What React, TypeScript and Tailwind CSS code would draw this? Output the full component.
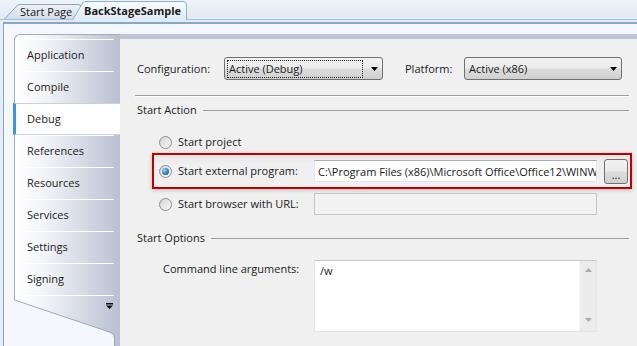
import React from 'react';

const navItems = ['Application', 'Compile', 'Debug', 'References', 'Resources', 'Services', 'Settings', 'Signing'];

function Radio({ checked }: { checked?: boolean }) {
  return (
    <span className="w-[13px] h-[13px] shrink-0 rounded-full border border-[#8e8f8f] bg-[linear-gradient(135deg,#d4d4d4,#fafafa)] flex items-center justify-center">
      {checked && (
        <span className="w-[7px] h-[7px] rounded-full bg-[radial-gradient(circle_at_35%_35%,#9ad8f7,#2a7cc0_55%,#174f83)]" />
      )}
    </span>
  );
}

function ComboArrow() {
  return (
    <svg width="7" height="4" viewBox="0 0 7 4" className="shrink-0">
      <path d="M0 0H7L3.5 4Z" fill="#000" />
    </svg>
  );
}

function Combo({ value, focus, className }: { value: string; focus?: boolean; className: string }) {
  return (
    <div
      className={`h-[23px] rounded-[3px] border border-[#707070] bg-[linear-gradient(#f2f2f2,#ebebeb_48%,#dddddd_52%,#cfcfcf)] flex items-center pl-[2px] pr-[4px] ${className}`}
    >
      {focus ? (
        <div className="w-[136px] h-[18px] border border-dotted border-[#202020] flex items-center pl-[1px]">{value}</div>
      ) : (
        <div className="pl-[2px]">{value}</div>
      )}
      <div className="ml-auto">
        <ComboArrow />
      </div>
    </div>
  );
}

function SectionHeader({ title }: { title: string }) {
  return (
    <div className="h-[16px] flex items-center">
      <span className="pl-[2px]">{title}</span>
      <div className="flex-1 ml-[6px] h-px bg-[#a0a0a0]" />
    </div>
  );
}

function NavBottom() {
  return (
    <svg width="106" height="46" viewBox="0 0 106 46" className="block">
      <defs>
        <linearGradient id="navg" x1="0" y1="0" x2="1" y2="0">
          <stop offset="0" stopColor="#ffffff" />
          <stop offset="0.3" stopColor="#f1f3f7" />
          <stop offset="1" stopColor="#b8c0d1" />
        </linearGradient>
      </defs>
      <path d="M0 0H106V46H100V38Q100 33 94 31.5Z" fill="url(#navg)" />
      <path d="M0.5 0L94 31.5Q100.5 33.5 100.5 38V46" fill="none" stroke="#9ba7bb" />
      <rect x="92" y="3" width="7" height="1.5" fill="#111" />
      <path d="M92 5.5H99L95.5 9Z" fill="#111" />
    </svg>
  );
}

export default function App() {
  return (
    <div className="w-[637px] h-[346px] overflow-hidden bg-[#e4ebf5] text-[11px] leading-[16px] text-[#1b1b1b] font-['Open_Sans',sans-serif] flex flex-col">
      {/* document tabs */}
      <div className="h-[20px] shrink-0 flex items-end pl-[4px] border-b border-[#a6c4de] bg-[linear-gradient(#eef3f9,#e2e9f3)]">
        <div className="relative w-[78px] h-[15px] flex items-center">
          <svg width="78" height="15" viewBox="0 0 78 15" className="absolute inset-0">
            <defs>
              <linearGradient id="tab1" x1="0" y1="0" x2="0" y2="1">
                <stop offset="0" stopColor="#eef2f8" />
                <stop offset="1" stopColor="#d3dce8" />
              </linearGradient>
            </defs>
            <path d="M0.5 15L13 1.8Q14 0.5 16 0.5H74Q77.5 0.5 77.5 4V15" fill="url(#tab1)" stroke="#8ea5bf" />
          </svg>
          <span className="relative pl-[16px] pt-[1px] whitespace-nowrap">Start Page</span>
        </div>
        <div className="relative -ml-[10px] -mb-px w-[115px] h-[19px] flex items-center">
          <svg width="115" height="19" viewBox="0 0 115 19" className="absolute inset-0">
            <defs>
              <linearGradient id="tab2" x1="0" y1="0" x2="0" y2="1">
                <stop offset="0" stopColor="#fbfdff" />
                <stop offset="1" stopColor="#e0eaf5" />
              </linearGradient>
            </defs>
            <path d="M0.5 19L11 1.5Q12 0.5 14 0.5H111Q114.5 0.5 114.5 4V19" fill="url(#tab2)" stroke="#8db0d0" />
          </svg>
          <span className="relative pl-[12px] font-bold whitespace-nowrap">BackStageSample</span>
        </div>
      </div>

      {/* window frame */}
      <div className="flex-1 mt-[2px] ml-[3px] border-l border-t-2 border-[#86a9c6] bg-[#f4f7fc] pl-[10px] pt-[10px] flex">
        {/* side nav */}
        <div className="w-[106px] shrink-0 flex flex-col">
          <div className="border-l border-t border-[#a2abbd] rounded-tl-[6px] bg-[linear-gradient(to_right,#ffffff,#f1f3f7_30%,#b8c0d1)] pt-[4px] pb-[4px] flex flex-col">
            {navItems.map((item) =>
              item === 'Debug' ? (
                <div
                  key={item}
                  className="relative -ml-[2px] h-[32px] bg-white border-l-[3px] border-l-[#3b93e6] border-y border-y-[#cbd1dc] flex items-center pl-[11px]"
                >
                  {item}
                </div>
              ) : (
                <div key={item} className="h-[32px] flex flex-col">
                  <div className="ml-[4px] mr-[6px] h-px bg-white" />
                  <div className="flex-1 flex items-center pl-[12px] -mt-px">{item}</div>
                </div>
              )
            )}
            <div className="ml-[4px] mr-[6px] h-px bg-white" />
          </div>
          <NavBottom />
        </div>

        {/* property page */}
        <div className="flex-1 bg-[#f0f0f0] border-t-[5px] border-t-[#bec5d5] pl-[15px] pr-[8px] flex flex-col">
          <div className="mt-[18px] h-[23px] flex items-center">
            <span className="w-[89px] pl-[2px]">Configuration:</span>
            <Combo value="Active (Debug)" focus className="w-[159px]" />
            <span className="ml-[22px] w-[59px]">Platform:</span>
            <Combo value="Active (x86)" className="w-[158px]" />
          </div>

          <div className="mt-[15px] h-px bg-[#a0a0a0]" />
          <div className="h-px bg-white" />

          <div className="mt-[5px]">
            <SectionHeader title="Start Action" />
          </div>

          <div className="mt-[14px] h-[20px] pl-[24px] flex items-center gap-[6px]">
            <Radio />
            <span>Start project</span>
          </div>

          <div className="mt-[1px] ml-[17px] -mr-[3px] h-[36px] border-2 border-[#c00000] bg-[linear-gradient(#e6e6e6,#f0f0f0_30%)] shadow-[0_1px_4px_rgba(0,0,0,0.25)] pl-[5px] flex items-center">
            <div className="w-[155px] flex items-center gap-[6px]">
              <Radio checked />
              <span>Start external program:</span>
            </div>
            <input
              readOnly
              value="C:\Program Files (x86)\Microsoft Office\Office12\WINWORD.EXE"
              className="w-[283px] h-[22px] bg-white border border-[#e2e7ec] border-t-[#abadb3] pl-[3px] outline-none text-[11px] text-[#1b1b1b] font-['Open_Sans',sans-serif]"
            />
            <button className="ml-[7px] w-[24px] h-[25px] rounded-[3px] border border-[#707070] bg-[linear-gradient(#f2f2f2,#ebebeb_48%,#dddddd_52%,#cfcfcf)] flex items-end justify-center pb-[3px] leading-[10px]">
              ...
            </button>
          </div>

          <div className="mt-[3px] h-[24px] pl-[24px] flex items-center">
            <div className="w-[155px] flex items-center gap-[6px]">
              <Radio />
              <span>Start browser with URL:</span>
            </div>
            <div className="w-[283px] h-[22px] bg-[#f2f2f2] border border-[#c2c6cb]" />
          </div>

          <div className="mt-[14px]">
            <SectionHeader title="Start Options" />
          </div>

          <div className="mt-[14px] pl-[28px] flex items-start">
            <span className="w-[151px] pt-px">Command line arguments:</span>
            <div className="w-[283px] h-[72px] bg-white border border-[#e2e7ec] border-t-[#c5c9ce] flex">
              <div className="flex-1 pl-[5px] pt-[2px]">/w</div>
              <div className="w-[17px] bg-[#ececec] border-l border-[#f8f8f8] flex flex-col items-center justify-between pt-[7px] pb-[9px]">
                <svg width="7" height="4" viewBox="0 0 7 4">
                  <path d="M0 4H7L3.5 0Z" fill="#a9a9a9" />
                </svg>
                <svg width="7" height="4" viewBox="0 0 7 4">
                  <path d="M0 0H7L3.5 4Z" fill="#a9a9a9" />
                </svg>
              </div>
            </div>
          </div>
        </div>
      </div>
    </div>
  );
}
